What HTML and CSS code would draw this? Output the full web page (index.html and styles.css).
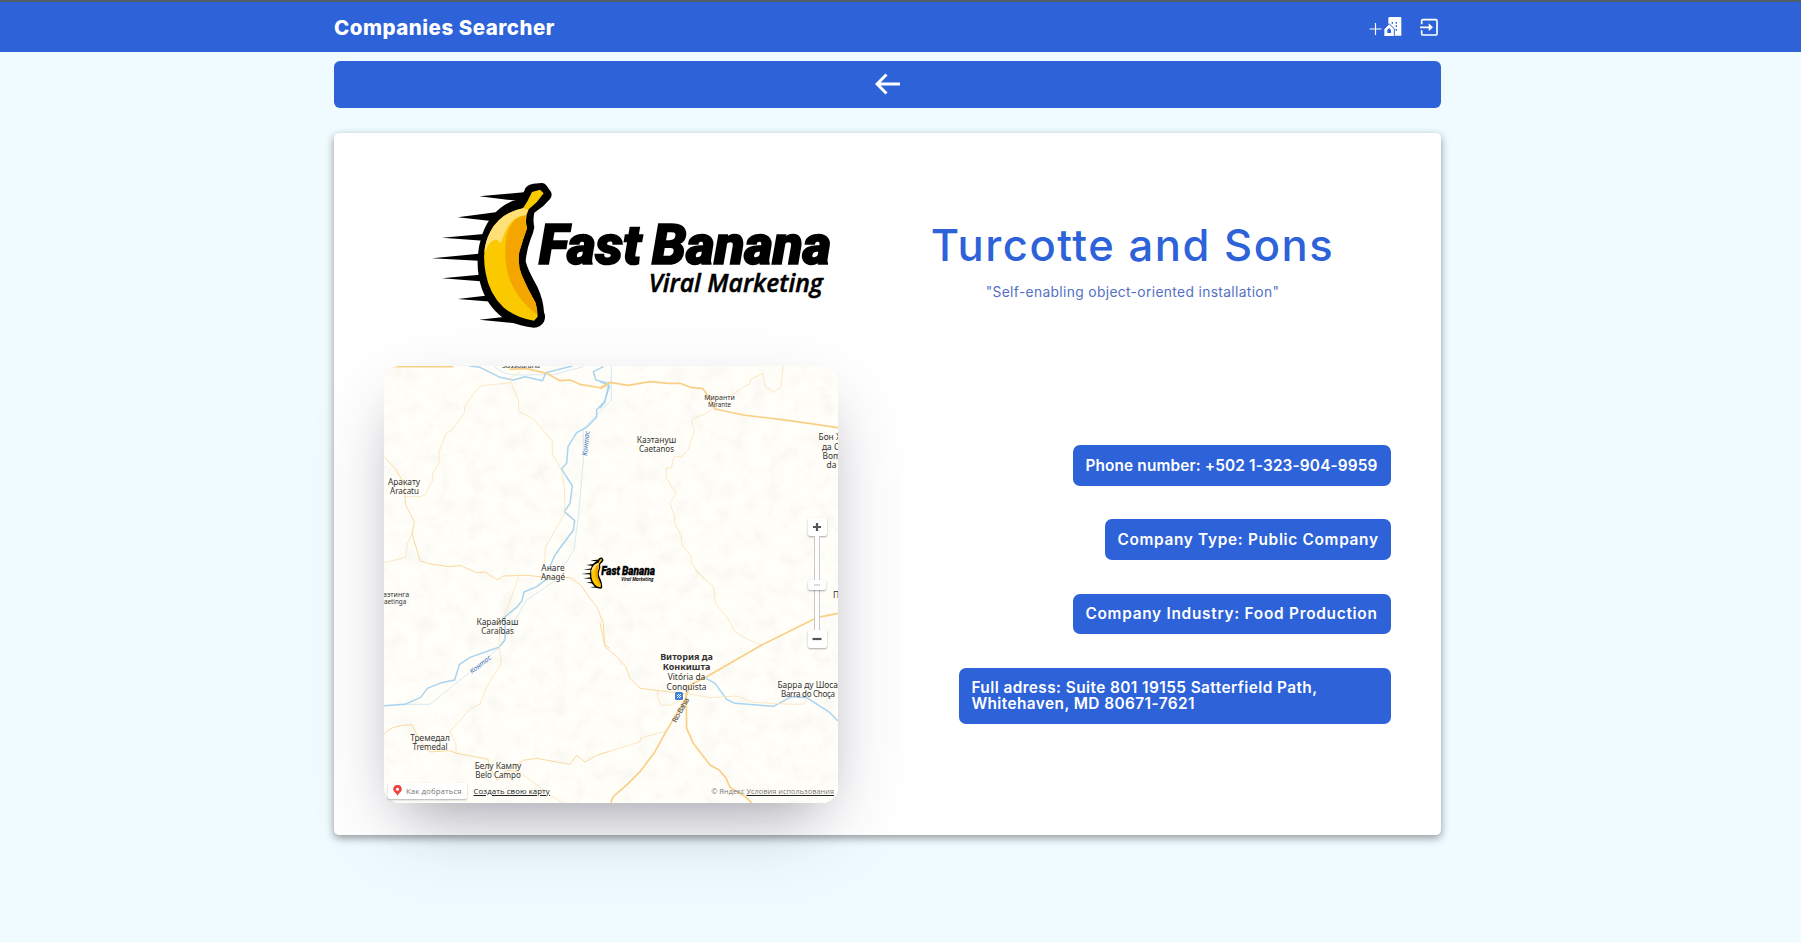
FILE: index.html
```html
<!DOCTYPE html>
<html lang="en">
<head>
<meta charset="utf-8">
<title>Companies Searcher</title>
<link rel="stylesheet" href="styles.css">
</head>
<body>
<header class="header">
  <div class="container header-inner">
    <div class="brand">Companies Searcher</div>
    <nav class="actions">
      <svg class="icon-add" viewBox="88 45 99 70">
        <path d="M90 87H125M107.500 69V105" stroke="#fff" stroke-width="3.500" fill="none"/>
        <path fill="#fff" fill-rule="evenodd" d="M150 51H183Q185 51 185 53V107H146V55Q146 51 150 51ZM156 66V71H160V66ZM168 66V71H172V66ZM168 76V81H172V76ZM168 87V92H172V87Z"/>
        <path d="M134 108V87L148.500 72L163 87V108Z" fill="#fff"/>
        <path d="M131 89L148.500 71L164 87V107" fill="none" stroke="#2d62d9" stroke-width="3"/>
        <path d="M143 99V90L148.500 84L154 90V99Z" fill="#2d62d9"/>
      </svg>
      <svg class="icon-exit" viewBox="242 51 56 56">
        <path d="M247 70V60Q247 56 251 56H289Q293 56 293 60V98Q293 102 289 102H251Q247 102 247 98V88M242 79H274" fill="none" stroke="#fff" stroke-width="5"/>
        <path d="M268 67L281 79L268 91Z" fill="#fff"/>
      </svg>
    </nav>
  </div>
</header>
<main class="container">
  <a class="back" href="#">
    <svg class="icon-back" viewBox="0 0 26 22"><path d="M11.500 1.500L2 11L11.500 20.500M2 11H25" fill="none" stroke="#fff" stroke-width="3"/></svg>
  </a>
  <section class="card">
    <svg class="logo" viewBox="0 0 1260 510">
      <defs>
        <g id="logo">
          <path d="M178 79L320 66L310 94L262 89ZM113 142L250 124L220 154ZM66 203L200 191L190 212ZM36 265L190 250V273ZM66 325L195 313L200 335ZM113 387L215 375L235 397ZM178 449L275 438L310 462Z"/>
          <path d="M313 62Q316 46 340 41L365 39Q374 38 380 47L393 66Q398 77 390 87L370 108L343 128Q338 150 343 172Q340 190 332 207Q320 238 317 274Q323 300 352 350Q370 388 372 427Q378 441 372 455Q362 472 342 473Q300 468 262 452Q208 420 185 355Q160 275 186 195Q211 123 275 94Q302 91 313 62Z"/>
          <path fill="#fbc900" d="M336 66L360 59L371 70L350 97L326 118Q313 145 321 175Q310 205 298 245Q292 285 305 315Q327 365 346 397Q353 420 353 440L342 452Q290 445 250 412Q208 372 197 310Q183 235 211 185Q241 128 309 115Q323 95 336 66Z"/>
          <path fill="#ffe078" d="M309 115Q241 128 211 185Q195 215 193 249Q209 207 231 209L243 220Q255 178 275 155Q293 137 317 136L325 119Z"/>
          <path fill="#f4a500" d="M317 136Q292 140 278 158Q256 185 256 237Q252 315 293 374Q318 410 350 432Q352 415 346 397Q324 360 305 315Q292 285 298 245Q310 205 321 175Q315 155 317 136Z"/>
          <g class="logo-name">
            <text x="357" y="282" textLength="307" lengthAdjust="spacingAndGlyphs">Fast</text>
            <text x="696" y="282" textLength="537" lengthAdjust="spacingAndGlyphs">Banana</text>
          </g>
          <text class="logo-tag" x="686" y="365" textLength="523" lengthAdjust="spacingAndGlyphs">Viral Marketing</text>
        </g>
      </defs>
      <use href="#logo"/>
    </svg>
    <div class="heading">
      <h1 class="title">Turcotte and Sons</h1>
      <p class="phrase">"Self-enabling object-oriented installation"</p>
    </div>
    <div class="map">
      <svg class="map-canvas" viewBox="0 0 454 437">
        <defs>
          <filter id="relief" x="0" y="0" width="100%" height="100%">
            <feTurbulence type="fractalNoise" baseFrequency="0.06" numOctaves="4" seed="8"/>
            <feColorMatrix values="0 0 0 0 .72  0 0 0 0 .72  0 0 0 0 .72  1.300 0 0 0 -.58"/>
          </filter>
        </defs>
        <rect width="454" height="437" fill="#fffef8"/>
        <rect width="454" height="437" filter="url(#relief)" opacity=".36"/>
        <g transform="translate(-14 -16) scale(.33333)" fill="none" stroke-linejoin="round">
          <g class="river">
            <path d="M298 48L330 52L390 82L430 90L465 80L518 92L527 68L607 48M700 50L670 65L678 90L712 100L718 110L703 155L680 180V202L650 232L620 248L594 290L590 340L574 356L607 408L600 460L583 485L614 512L610 540L555 615L535 660"/>
            <path class="thin" d="M370 48Q400 75 440 75L550 74L640 50M724 48V150L640 236V330L625 500L612 600L580 650"/>
          </g>
          <path class="road wide" d="M62 50H250M418 58L470 56L530 70L570 92L600 90L630 103L695 114L720 98"/>
          <path class="road thin" d="M455 62L423 82V98L330 108L306 138L285 168L283 188L245 242L228 250L207 305V340L188 370V390L165 434L150 440H105M423 98L445 150L447 185L490 206L547 274V312L575 362L584 420V490L540 568L526 592L524 640M130 545L112 580L107 622L42 638"/>
          <path class="road" d="M42 320L75 355L102 400L107 465L133 515L126 550L150 632L180 642L240 650L270 646L320 668L345 666L382 690L400 678L470 676L530 682L600 683"/>
        </g>
        <g transform="translate(216 -16) scale(.33333)" fill="none" stroke-linejoin="round">
          <path class="river" d="M0 95L26 105L15 155L0 174"/>
          <path class="road wide" d="M0 114L30 97L85 106L150 95L205 100L240 100L275 113L308 115L325 140L345 177L430 195L570 212L714 233"/>
          <path class="road thin" d="M395 138L430 110L450 102L452 88L488 70L495 108L520 127L542 112L550 48M335 178L315 192L280 205L275 216L284 242L265 298L245 320H222L214 354H199V384L228 430L210 460L224 500V520L243 558L247 588L274 618V640L313 690"/>
        </g>
        <g transform="translate(-14 204) scale(.33333)" fill="none" stroke-linejoin="round">
          <path class="river" d="M540 20L500 50L462 66L456 92L440 112L405 140V210L388 231L300 262L268 284L254 330L215 338L172 355L152 382L105 403L42 407"/>
          <path class="river thin" d="M560 28L470 90L412 190L385 236L180 403H105"/>
          <path class="road thin" d="M446 20L410 120L390 160L387 220L394 280L350 350L330 402L300 418L240 484L258 525V552M450 607L540 675L580 698"/>
          <path class="road" d="M600 22L632 45L660 85L680 110L700 160L704 224L720 235M42 492Q60 466 125 464L150 512L180 546L235 542L270 552L355 568L358 592L382 631L410 600L440 605L435 590L460 571L500 565L600 583L620 556L645 576L680 556L720 544"/>
        </g>
        <g transform="translate(216 204) scale(.33333)" fill="none" stroke-linejoin="round">
          <path class="river" d="M318 325L345 340L380 388L405 400L520 409L575 380L620 383L690 428L714 453"/>
          <path class="road thin" d="M285 0L340 50L347 102L380 140L405 185L440 207L485 225M258 370L330 383L410 378L460 397L580 403L612 402L620 388M172 360L175 392L185 405L210 406L240 390M0 552L120 516L122 504L200 483"/>
          <path class="road" d="M0 158L15 230L50 260L77 290L90 325L120 355L258 372"/>
          <path class="road wide" d="M714 130L650 143L485 225L320 320L270 345L255 390L195 490L165 545L120 605L85 640L40 680L32 698M258 370L260 475L280 520L330 585L357 600L377 622L390 652L435 680L455 698"/>
        </g>
        <g class="place" text-anchor="middle">
          <text class="small" x="137" y="1.500">Sussuarana</text>
          <text x="20" y="119">Аракату</text><text class="latin" x="20.500" y="128">Aracatu</text>
          <text class="small" x="335.500" y="34">Миранти</text><text class="tiny" x="335.500" y="41">Mirante</text>
          <text x="272.500" y="77">Каэтануш</text><text class="latin" x="272.500" y="86">Caetanos</text>
          <text x="169" y="205">Анаге</text><text class="latin" x="169" y="214">Anagé</text>
          <text x="113.500" y="259">Карайбаш</text><text class="latin" x="113.500" y="267.500">Caraíbas</text>
          <text x="46" y="375">Тремедал</text><text class="latin" x="46" y="384">Tremedal</text>
          <text x="114" y="403">Белу Кампу</text><text class="latin" x="114" y="412">Belo Campo</text>
          <text class="city" x="302.500" y="293.500">Витория да</text><text class="city" x="302.500" y="304">Конкишта</text>
          <text x="302.500" y="314">Vitória da</text><text x="302.500" y="324">Conquista</text>
        </g>
        <g class="place">
          <text x="434.500" y="74">Бон Х</text><text x="438" y="83.500">да С</text><text x="438.500" y="92.500">Bom</text><text x="442.500" y="101.500">da S</text>
          <text x="-1" y="231" class="small">аэтинга</text><text x="0" y="238" class="tiny">aetinga</text>
          <text x="393.500" y="322" textLength="60.500">Барра ду Шоса</text><text class="latin" x="397" y="331" textLength="54">Barra do Choça</text>
          <text x="449" y="232">П</text>
        </g>
        <g class="water-label">
          <text transform="translate(203 90) rotate(-84)">Контас</text>
          <text transform="translate(88 308) rotate(-38)">Контас</text>
        </g>
        <text class="route-label" transform="translate(292 357) rotate(-60)" textLength="27">Rio-Bahia</text>
        <rect x="291" y="326" width="8" height="8" rx="1.500" fill="#3d80dd"/>
        <path d="M293 332L297 328M293 329L296 332M294 328L297 331" stroke="#fff" stroke-width="1"/>
        <use href="#logo" transform="translate(195.300 188.800) scale(.0613 .072)"/>
      </svg>
      <div class="zoom">
        <button class="zoom-btn"><svg viewBox="0 0 10 10"><path d="M5 1V9M1 5H9" stroke="#555" stroke-width="2.200"/></svg></button>
        <div class="zoom-track"><span class="zoom-thumb"></span></div>
        <button class="zoom-btn"><svg viewBox="0 0 10 10"><path d="M.5 5H9.500" stroke="#555" stroke-width="2.200"/></svg></button>
      </div>
      <div class="map-footer">
        <a class="route" href="#"><svg viewBox="0 0 9 11"><path d="M4.500 11Q3.800 8.500 2 7.500A4.300 4.300 0 1 1 7 7.500Q5.200 8.500 4.500 11Z" fill="#ed4543"/><circle cx="4.500" cy="4.200" r="1.500" fill="#fff"/></svg><span>Как добраться</span></a>
        <a class="create" href="#">Создать свою карту</a>
        <span class="legal">© Яндекс <a href="#">Условия использования</a></span>
      </div>
    </div>
    <div class="facts">
      <div class="chip phone">Phone number: +502 1-323-904-9959</div>
      <div class="chip type">Company Type: Public Company</div>
      <div class="chip industry">Company Industry: Food Production</div>
      <div class="chip address"><span class="line">Full adress: Suite 801 19155 Satterfield Path,</span> <span class="line">Whitehaven, MD 80671-7621</span></div>
    </div>
  </section>
</main>
</body>
</html>
```
FILE: styles.css
```css
* { box-sizing: border-box; }
body { margin: 0; min-height: 942px; background: #effbff; font-family: Inter, "Open Sans", sans-serif; }
svg { display: block; }
.container { width: 1107px; margin-left: 334px; }
.header { height: 52px; background: #2d62d9; border-top: 2px solid #515e68; }
.header-inner { height: 50px; display: flex; justify-content: space-between; align-items: center; }
.brand { color: #fff; font-size: 20.500px; font-weight: 800; letter-spacing: .5px; white-space: nowrap; }
.actions { display: flex; gap: 18px; align-items: center; padding-right: 2px; }
.icon-add { width: 33px; height: 23.300px; }
.icon-exit { width: 18.700px; height: 18.700px; }
.back { height: 47px; margin-top: 9px; border-radius: 6px; background: #2d62d9; display: flex; align-items: center; justify-content: center; }
.icon-back { width: 26px; height: 22px; margin-top: -2px; }
.card {
  height: 702px; margin-top: 25px; padding: 37px 50px 32px; background: #fff; border-radius: 5px;
  box-shadow: 0 3px 8px rgba(0, 0, 0, .4);
  display: grid; grid-template-columns: 454px 517px; grid-template-rows: 170px 437px; column-gap: 36px; row-gap: 26px;
}
.logo { width: 420px; height: 170px; margin-left: 36px; }
.logo-name { font: italic 900 167px Roboto, sans-serif; stroke: #000; stroke-width: 5px; }
.logo-tag { font: italic 600 76px "Open Sans", sans-serif; stroke: #000; stroke-width: 1.500px; }
.heading { text-align: center; padding-top: 48px; white-space: nowrap; }
.title { margin: 0; color: #2d62d9; font-size: 43.500px; line-height: 54px; font-weight: 500; letter-spacing: 1.550px; }
.phrase { margin: 8px 0 0; color: #5470c4; font-size: 13.800px; line-height: 24px; letter-spacing: .35px; }
.map {
  position: relative; width: 454px; height: 437px; border-radius: 16px;
  box-shadow: 0 30px 80px -16px rgba(50, 50, 93, .25), 0 24px 50px -24px rgba(0, 0, 0, .28);
}
.map-canvas { width: 454px; height: 437px; border-radius: 16px; }
.river { stroke: #a9d4f0; stroke-width: 4.500; }
.thin { stroke-width: 2; stroke-opacity: .7; }
.road { stroke: #fad99d; stroke-width: 3; }
.road.thin { stroke: #fbe2bb; stroke-width: 2.500; stroke-opacity: 1; }
.road.wide { stroke: #f9cf86; stroke-width: 5; }
.place { font: 8.400px "Noto Sans", sans-serif; fill: #333; }
.latin { font-size: 8px; }
.small { font-size: 7px; }
.tiny { font-size: 6.300px; }
.city { font-weight: 700; font-size: 9px; }
.water-label { font: italic 7px "Noto Sans", sans-serif; fill: #4272bd; }
.route-label { font: 7px "Noto Sans", sans-serif; fill: #444; }
.zoom { position: absolute; left: 423.500px; top: 152px; width: 19px; display: flex; flex-direction: column; align-items: center; }
.zoom-btn { width: 19px; height: 18px; padding: 4px; border: 0; border-radius: 2px; background: #fff; box-shadow: 0 1px 2px rgba(0, 0, 0, .35); display: grid; place-items: center; }
.zoom-btn svg { width: 10px; height: 10px; }
.zoom-track { width: 6px; height: 94px; border: solid #c8c8c8; border-width: 0 1px; background: #fff; display: flex; align-items: center; justify-content: center; }
.zoom-thumb { flex: none; width: 18px; height: 10px; margin-top: 4px; border-radius: 2px; background: linear-gradient(#ddd, #ddd) center / 6px 2px no-repeat, #fff; box-shadow: 0 1px 2px rgba(0, 0, 0, .35); }
.map-footer { position: absolute; left: 4px; right: 4px; bottom: 4px; height: 17px; display: flex; align-items: center; font: 7.800px "Open Sans", sans-serif; white-space: nowrap; }
.route { width: 79px; height: 16px; display: flex; align-items: center; gap: 4px; padding-left: 5px; border-radius: 2px; background: #fff; box-shadow: 0 1px 2px rgba(0, 0, 0, .3); color: #777; text-decoration: none; letter-spacing: .1px; }
.route svg { width: 9px; height: 11px; }
.create { margin-left: 6.500px; color: #222; letter-spacing: .1px; }
.legal { margin-left: auto; color: #777; font-size: 7.300px; letter-spacing: .06px; }
.legal a { color: inherit; text-decoration-color: #222; }
.facts { padding-top: 79px; display: flex; flex-direction: column; align-items: flex-end; gap: 33.700px; }
.chip { padding: 12.600px 12.400px 12px; border-radius: 7px; background: #2d62d9; color: #fff; font-size: 15.400px; line-height: 16px; font-weight: 600; white-space: nowrap; }
.phone { width: 318px; letter-spacing: .14px; }
.type { width: 286px; letter-spacing: .68px; }
.industry { width: 318px; letter-spacing: .73px; }
.address { width: 432px; letter-spacing: .42px; }
.line { display: block; }
```
